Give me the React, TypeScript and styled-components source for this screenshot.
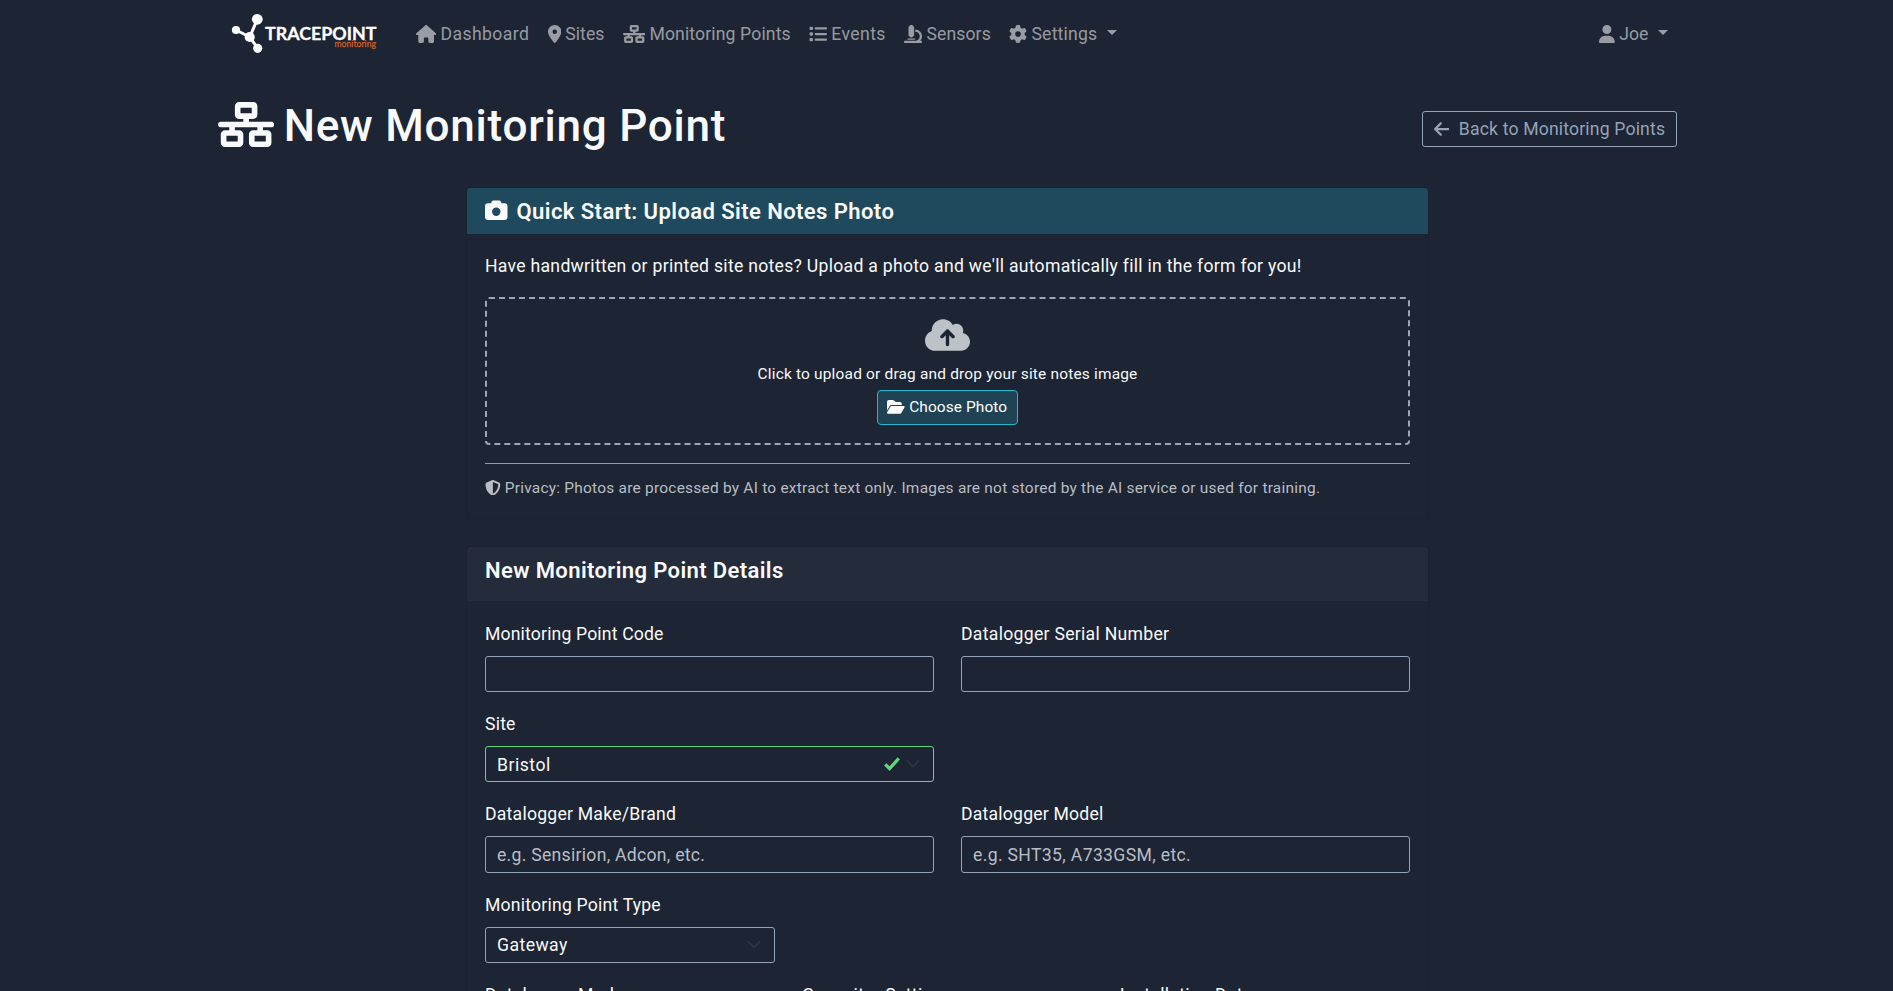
import React from "react";
import styled, { createGlobalStyle } from "styled-components";
import {
  FaArrowLeft,
  FaCamera,
  FaCloudArrowUp,
  FaFolderOpen,
  FaGear,
  FaHouse,
  FaList,
  FaLocationDot,
  FaMicroscope,
  FaNetworkWired,
  FaShieldHalved,
  FaUser,
} from "react-icons/fa6";

const color = {
  page: "#1d2433",
  cardEdge: "#1b212f",
  header: "#242b3a",
  accent: "#1f495c",
  accentButton: "#1f4254",
  accentBorder: "#22b8d3",
  text: "#f8fafc",
  muted: "#b9bec5",
  nav: "rgba(255, 255, 255, 0.55)",
  outline: "#94a3b8",
  chevron: "#2c3446",
  valid: "#62d67c",
  brand: "#cf6326",
};

const GlobalStyle = createGlobalStyle`
  *, *::before, *::after { box-sizing: border-box; }
  html, body { margin: 0; background: ${color.page}; }
  body {
    color: ${color.text};
    font-family: Roboto, "Liberation Sans", sans-serif;
    font-size: 17.64px;
    line-height: 27px;
    overflow: hidden;
  }
`;

type Tracking = { $track?: number };

const Page = styled.div`
  height: 991px;
  overflow: hidden;
  padding-left: 2px;
`;

const Container = styled.div`
  width: 1459px;
  margin: 0 auto;
`;

/* $ratio is the glyph's width over its height */
const Icon = styled.span<{ $size: number; $ratio?: number; $lift?: number }>`
  display: block;
  flex: none;
  padding-bottom: ${(p) => p.$lift ?? 0}px;
  svg {
    display: block;
    height: ${(p) => p.$size}px;
    width: ${(p) => p.$size * (p.$ratio ?? 1)}px;
  }
`;

const Text = styled.span<Tracking>`
  letter-spacing: ${(p) => p.$track ?? 0}px;
  white-space: nowrap;
`;

const Navbar = styled.nav`
  display: flex;
  align-items: center;
  height: 68px;
  padding: 0 9px 0 13px;
`;

const Logo = styled.svg`
  display: block;
  width: 150px;
  height: 44px;
  margin-right: 35px;
`;

const NavLinks = styled.div`
  display: flex;
  flex: 1;
  gap: 18.4px;
`;

const NavLink = styled.a`
  display: flex;
  align-items: center;
  gap: 4.2px;
  color: ${color.nav};
`;

const Caret = styled.span`
  margin: 0 0 3px 5.5px;
  border-top: 5px solid;
  border-left: 5px solid transparent;
  border-right: 5px solid transparent;
`;

const TitleRow = styled.header`
  display: flex;
  align-items: center;
  justify-content: space-between;
  height: 54px;
  margin: 31px 0 35px;
`;

const Title = styled.h1`
  display: flex;
  align-items: center;
  gap: 9.5px;
  margin: 0;
  font-size: 44.1px;
  font-weight: 500;
  line-height: 54px;
`;

const BackButton = styled.button`
  display: flex;
  align-items: center;
  gap: 9.5px;
  width: 255px;
  height: 36px;
  margin-top: 6px;
  padding: 0 0 0 10.5px;
  border: 1px solid ${color.outline};
  border-radius: 3px;
  background: transparent;
  color: ${color.outline};
  font: inherit;
`;

const Card = styled.section`
  width: 961px;
  margin: 0 auto 29px;
  border-radius: 3px;
  box-shadow: 0 0 0 1px ${color.cardEdge};
`;

const CardHeader = styled.div<{ $accent?: boolean }>`
  display: flex;
  align-items: flex-start;
  gap: 9px;
  height: ${(p) => (p.$accent ? 46 : 54)}px;
  padding: 10px 18px 0;
  border-radius: 3px 3px 0 0;
  background: ${(p) => (p.$accent ? color.accent : color.header)};
  ${Icon} { padding-top: 1px; }
`;

const CardTitle = styled.h2<Tracking>`
  margin: 0;
  font-size: 22.05px;
  font-weight: 600;
  line-height: 27px;
  letter-spacing: ${(p) => p.$track ?? 0}px;
`;

const UploadBody = styled.div`
  height: 284px;
  padding: 19px 18px 18px;
`;

const Intro = styled.p`
  margin: 0 0 17px;
`;

const DropZone = styled.div`
  display: flex;
  flex-direction: column;
  align-items: center;
  height: 148px;
  padding-top: 18px;
  border: 2px dashed #9ba6ba;
  border-radius: 4px;
`;

const CloudIcon = styled(Icon)`
  color: #bdc2c9;
`;

const DropHint = styled.p`
  margin: 9px 0 4px;
  font-size: 15.44px;
  line-height: 24px;
`;

const ChooseButton = styled.button`
  display: flex;
  align-items: center;
  gap: 4.5px;
  width: 141px;
  height: 35px;
  padding: 0 0 0 9px;
  border: 1px solid ${color.accentBorder};
  border-radius: 4px;
  background: ${color.accentButton};
  color: #fff;
  font: inherit;
  font-size: 15.44px;
`;

const Privacy = styled.p`
  display: flex;
  align-items: center;
  gap: 4px;
  margin: 18px 0 0;
  padding-top: 12px;
  border-top: 1px solid #929aa6;
  color: ${color.muted};
  font-size: 15.44px;
  line-height: 24px;
`;

const Form = styled.form`
  padding: 20px 18px 0;
`;

const FormRow = styled.div<{ $columns?: number }>`
  display: grid;
  grid-template-columns: repeat(${(p) => p.$columns ?? 2}, 1fr);
  column-gap: 27px;
  height: 90.2px;
`;

const Label = styled.label<Tracking>`
  display: block;
  margin-bottom: 8px;
  letter-spacing: ${(p) => p.$track ?? 0}px;
  white-space: nowrap;
`;

const Control = styled.div<{ $valid?: boolean }>`
  position: relative;
  height: 36.2px;
  border: 1px solid ${(p) => (p.$valid ? color.valid : color.outline)};
  border-radius: 3px;
`;

const Input = styled.input<Tracking>`
  display: block;
  width: 100%;
  height: 100%;
  padding: 1.4px 11px 0;
  border: 0;
  outline: 0;
  background: transparent;
  color: ${color.text};
  font: inherit;
  letter-spacing: ${(p) => p.$track ?? 0}px;
  &::placeholder {
    color: ${color.muted};
    opacity: 1;
  }
`;

const Select = styled.select<Tracking>`
  display: block;
  width: 100%;
  height: 100%;
  padding: 2px 11px 0;
  border: 0;
  appearance: none;
  background: transparent;
  color: ${color.text};
  font: inherit;
  letter-spacing: ${(p) => p.$track ?? 0}px;
`;

const SelectMarks = styled.div`
  position: absolute;
  top: 0;
  right: 13px;
  display: flex;
  align-items: center;
  gap: 6px;
  height: 100%;
  pointer-events: none;
  svg { display: block; }
`;

const navItems = [
  { icon: <FaHouse />, ratio: 1.125, label: "Dashboard", track: 0.4 },
  { icon: <FaLocationDot />, ratio: 0.75, label: "Sites", track: 0 },
  { icon: <FaNetworkWired />, ratio: 1.25, label: "Monitoring Points", track: 0.12 },
  { icon: <FaList />, ratio: 1, label: "Events", track: 0.38 },
  { icon: <FaMicroscope />, ratio: 1, label: "Sensors", track: 0.1 },
  { icon: <FaGear />, ratio: 1, label: "Settings", track: 0.2, menu: true },
];

function BrandLogo() {
  return (
    <Logo viewBox="0 0 150 44" aria-label="Tracepoint Monitoring">
      <g stroke="#fff" strokeWidth="3" fill="#fff">
        <path d="M5 18 L18.7 25 L26.3 7.3 M18.7 25 L26.7 36.3" fill="none" />
        <g stroke="none">
          <circle cx="5" cy="18" r="4.1" />
          <circle cx="26.3" cy="7.3" r="5.4" />
          <circle cx="18.7" cy="25" r="5.1" />
          <circle cx="26.7" cy="36.3" r="4.6" />
        </g>
      </g>
      <text x="34" y="28.4" fill="#fff" stroke="#fff" strokeWidth="0.3" fontFamily="Lato, sans-serif" fontWeight="700" fontSize="17.3" textLength="111.5" lengthAdjust="spacingAndGlyphs">TRACEPOINT</text>
      <text x="103.5" y="34.6" fill={color.brand} stroke={color.brand} strokeWidth="0.25" fontFamily="Lato, sans-serif" fontSize="9.8" textLength="41.5" lengthAdjust="spacingAndGlyphs">monitoring</text>
    </Logo>
  );
}

function Marks({ valid }: { valid?: boolean }) {
  return (
    <SelectMarks>
      {valid && (
        <svg width="16" height="14" viewBox="0 0 16 14">
          <path d="M1.2 7.4 L5.6 11.6 L14.8 1.4" fill="none" stroke={color.valid} strokeWidth="3.2" />
        </svg>
      )}
      <svg width="14" height="8" viewBox="0 0 14 8">
        <path d="M1.5 1 L7 6.5 L12.5 1" fill="none" stroke={color.chevron} strokeWidth="1.8" strokeLinecap="round" strokeLinejoin="round" />
      </svg>
    </SelectMarks>
  );
}

export default function App() {
  return (
    <Page>
      <GlobalStyle />
      <Container>
        <Navbar>
          <BrandLogo />
          <NavLinks>
            {navItems.map((item) => (
              <NavLink key={item.label}>
                <Icon $size={18} $ratio={item.ratio} $lift={1}>{item.icon}</Icon>
                <Text $track={item.track}>{item.label}</Text>
                {item.menu && <Caret />}
              </NavLink>
            ))}
          </NavLinks>
          <NavLink>
            <Icon $size={18} $ratio={0.875} $lift={1}><FaUser /></Icon>
            <Text>Joe</Text>
            <Caret />
          </NavLink>
        </Navbar>

        <TitleRow>
          <Title>
            <Icon $size={45} $ratio={1.25} $lift={4}><FaNetworkWired /></Icon>
            <Text $track={0.73}>New Monitoring Point</Text>
          </Title>
          <BackButton>
            <Icon $size={18} $ratio={0.875} $lift={1}><FaArrowLeft /></Icon>
            <Text $track={0.16}>Back to Monitoring Points</Text>
          </BackButton>
        </TitleRow>

        <Card>
          <CardHeader $accent>
            <Icon $size={22.5}><FaCamera /></Icon>
            <CardTitle $track={0.4}>Quick Start: Upload Site Notes Photo</CardTitle>
          </CardHeader>
          <UploadBody>
            <Intro>
              <Text $track={0.272}>
                Have handwritten or printed site notes? Upload a photo and we'll automatically fill in the form for you!
              </Text>
            </Intro>
            <DropZone>
              <CloudIcon $size={36} $ratio={1.25}><FaCloudArrowUp /></CloudIcon>
              <DropHint>
                <Text $track={0.19}>Click to upload or drag and drop your site notes image</Text>
              </DropHint>
              <ChooseButton>
                <Icon $size={15.75} $ratio={1.125} $lift={1}><FaFolderOpen /></Icon>
                <Text $track={0.09}>Choose Photo</Text>
              </ChooseButton>
            </DropZone>
            <Privacy>
              <Icon $size={15.75} $lift={1}><FaShieldHalved /></Icon>
              <Text $track={0.24}>
                Privacy: Photos are processed by AI to extract text only. Images are not stored by the AI service or used for training.
              </Text>
            </Privacy>
          </UploadBody>
        </Card>

        <Card>
          <CardHeader>
            <CardTitle $track={0.37}>New Monitoring Point Details</CardTitle>
          </CardHeader>
          <Form>
            <FormRow>
              <div>
                <Label $track={0.15}>Monitoring Point Code</Label>
                <Control><Input /></Control>
              </div>
              <div>
                <Label $track={0.28}>Datalogger Serial Number</Label>
                <Control><Input /></Control>
              </div>
            </FormRow>
            <FormRow>
              <div>
                <Label $track={0.2}>Site</Label>
                <Control $valid>
                  <Select $track={0.5}><option>Bristol</option></Select>
                  <Marks valid />
                </Control>
              </div>
            </FormRow>
            <FormRow>
              <div>
                <Label $track={0.22}>Datalogger Make/Brand</Label>
                <Control><Input $track={0.27} placeholder="e.g. Sensirion, Adcon, etc." /></Control>
              </div>
              <div>
                <Label $track={0.2}>Datalogger Model</Label>
                <Control><Input $track={0.33} placeholder="e.g. SHT35, A733GSM, etc." /></Control>
              </div>
            </FormRow>
            <FormRow $columns={3}>
              <div>
                <Label $track={0.2}>Monitoring Point Type</Label>
                <Control>
                  <Select $track={0.43}><option>Gateway</option></Select>
                  <Marks />
                </Control>
              </div>
            </FormRow>
            <FormRow $columns={3}>
              <Label $track={0.25}>Datalogger Mode</Label>
              <Label $track={0.3}>Capacitor Settings</Label>
              <Label $track={0.3}>Installation Date</Label>
            </FormRow>
          </Form>
        </Card>
      </Container>
    </Page>
  );
}
